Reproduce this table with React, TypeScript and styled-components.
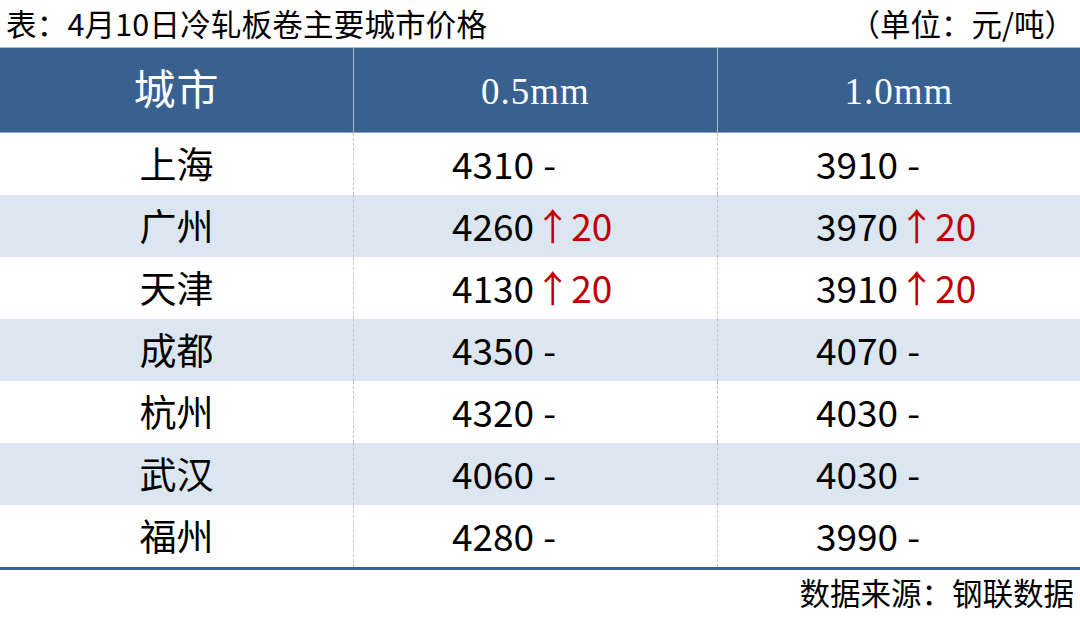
import React from 'react';
import styled, { createGlobalStyle } from 'styled-components';

const GlobalStyle = createGlobalStyle`
  html, body {
    margin: 0;
    padding: 0;
    background: #ffffff;
  }
  body {
    font-family: "Noto Sans CJK SC", "Noto Sans", sans-serif;
    color: #000;
  }
`;

const Page = styled.div`
  width: 1080px;
  height: 617px;
  display: flex;
  flex-direction: column;
  overflow: hidden;
`;

const TitleBar = styled.div`
  height: 47px;
  display: flex;
  align-items: center;
  justify-content: space-between;
  padding: 0 5px 0 6px;
  box-sizing: border-box;
  font-size: 30.5px;
  line-height: 1;
`;

const Title = styled.span`
  letter-spacing: 0.2px;
`;

const Unit = styled.span``;

const Table = styled.div`
  display: grid;
  grid-template-columns: 353px 364px 363px;
  grid-template-rows: 86px repeat(7, 62px);
  border-bottom: 3px solid #386190;
`;

const HeadCell = styled.div<{ $first?: boolean; $size: number }>`
  box-sizing: border-box;
  background: #386190;
  border-top: 1px solid #a9bbd3;
  border-bottom: 1px solid #8ea6c6;
  border-left: ${(p) => (p.$first ? 'none' : '1px solid #a9bbd3')};
  color: #ffffff;
  display: flex;
  align-items: center;
  justify-content: center;
  font-family: "Liberation Serif", "Noto Sans CJK SC", serif;
  font-size: ${(p) => p.$size}px;
  line-height: 1;
  letter-spacing: 1px;
  padding-top: 2px;
`;

const Cell = styled.div<{ $shade: boolean; $first?: boolean; $center?: boolean }>`
  box-sizing: border-box;
  background: ${(p) => (p.$shade ? '#dce6f1' : '#ffffff')};
  border-left: ${(p) => (p.$first ? 'none' : '1px dashed #c6c6c6')};
  display: flex;
  align-items: center;
  justify-content: ${(p) => (p.$center ? 'center' : 'flex-start')};
  padding-left: ${(p) => (p.$center ? 0 : 98)}px;
  font-size: 37px;
  line-height: 1;
  padding-bottom: 2px;
`;

const Up = styled.span`
  color: #c00000;
`;

const Flat = styled.span`
  margin-left: 9px;
`;

const Footer = styled.div`
  display: flex;
  justify-content: flex-end;
  padding: 4px 6px 0 0;
  font-size: 30.5px;
  line-height: 1.2;
`;

type Price = { value: number; change: number };
type Row = { city: string; thin: Price; thick: Price };

const rows: Row[] = [
  { city: '上海', thin: { value: 4310, change: 0 }, thick: { value: 3910, change: 0 } },
  { city: '广州', thin: { value: 4260, change: 20 }, thick: { value: 3970, change: 20 } },
  { city: '天津', thin: { value: 4130, change: 20 }, thick: { value: 3910, change: 20 } },
  { city: '成都', thin: { value: 4350, change: 0 }, thick: { value: 4070, change: 0 } },
  { city: '杭州', thin: { value: 4320, change: 0 }, thick: { value: 4030, change: 0 } },
  { city: '武汉', thin: { value: 4060, change: 0 }, thick: { value: 4030, change: 0 } },
  { city: '福州', thin: { value: 4280, change: 0 }, thick: { value: 3990, change: 0 } },
];

const PriceText: React.FC<{ price: Price }> = ({ price }) => (
  <>
    {price.value}
    {price.change > 0 ? <Up>↑{price.change}</Up> : <Flat>-</Flat>}
  </>
);

const App: React.FC = () => {
  return (
    <Page>
      <GlobalStyle />
      <TitleBar>
        <Title>表：4月10日冷轧板卷主要城市价格</Title>
        <Unit>（单位：元/吨）</Unit>
      </TitleBar>
      <Table>
        <HeadCell $first $size={42}>城市</HeadCell>
        <HeadCell $size={37}>0.5mm</HeadCell>
        <HeadCell $size={37}>1.0mm</HeadCell>
        {rows.map((r, i) => (
          <React.Fragment key={r.city}>
            <Cell $shade={i % 2 === 1} $first $center>{r.city}</Cell>
            <Cell $shade={i % 2 === 1}><PriceText price={r.thin} /></Cell>
            <Cell $shade={i % 2 === 1}><PriceText price={r.thick} /></Cell>
          </React.Fragment>
        ))}
      </Table>
      <Footer>数据来源：钢联数据</Footer>
    </Page>
  );
};

export default App;
